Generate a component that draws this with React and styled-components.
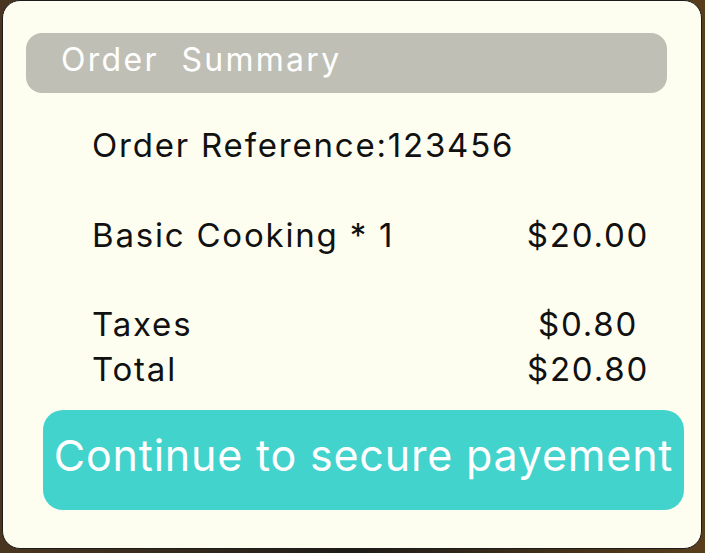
import styled, { createGlobalStyle } from 'styled-components';

const GlobalStyle = createGlobalStyle`
	html, body {
		margin: 0;
		padding: 0;
		background: #2b2214;
		font-family: Inter, 'Noto Sans', sans-serif;
	}
`;

const Page = styled.div`
	width: 705px;
	height: 553px;
	background: linear-gradient(90deg, #4a3620 0%, #1e1c18 50%, #5a3e1a 100%);
	padding: 0 3px 3px 2px;
	box-sizing: border-box;
`;

const Card = styled.div`
	height: 549px;
	box-sizing: border-box;
	background: #fefef0;
	border: 1px solid #1c1c1c;
	border-radius: 18px;
	display: flex;
	flex-direction: column;
	padding-top: 32px;
`;

const TitleBar = styled.div`
	margin: 0 34px 0 23px;
	height: 60px;
	box-sizing: border-box;
	border-radius: 16px;
	background: #bfbfb6;
	color: #ffffff;
	font-size: 32px;
	letter-spacing: 2.3px;
	display: flex;
	align-items: center;
	padding: 0 0 7px 35px;
	white-space: pre;
`;

const Section = styled.div`
	margin: ${(p) => p.$top}px 0 0 89px;
	color: #111;
	font-size: 33px;
	letter-spacing: 1.8px;
	line-height: 45px;
`;

const Row = styled.div`
	display: grid;
	grid-template-columns: 421px 150px;
`;

const Amount = styled.span`
	text-align: center;
`;

const PayButton = styled.button`
	margin: 18px 17px 0 40px;
	height: 100px;
	border: none;
	border-radius: 20px;
	background: #42d3cd;
	color: #ffffff;
	font-family: inherit;
	font-size: 43px;
	letter-spacing: 0.8px;
	cursor: pointer;
	padding: 0 0 10px;
`;

export default function App() {
	return (
		<>
			<GlobalStyle />
			<Page>
				<Card>
					<TitleBar>Order  Summary</TitleBar>
					<Section $top={30}>Order Reference:123456</Section>
					<Section $top={45}>
						<Row>
							<span>Basic Cooking * 1</span>
							<Amount>$20.00</Amount>
						</Row>
					</Section>
					<Section $top={44}>
						<Row>
							<span>Taxes</span>
							<Amount>$0.80</Amount>
						</Row>
						<Row>
							<span>Total</span>
							<Amount>$20.80</Amount>
						</Row>
					</Section>
					<PayButton>Continue to secure payement</PayButton>
				</Card>
			</Page>
		</>
	);
}
